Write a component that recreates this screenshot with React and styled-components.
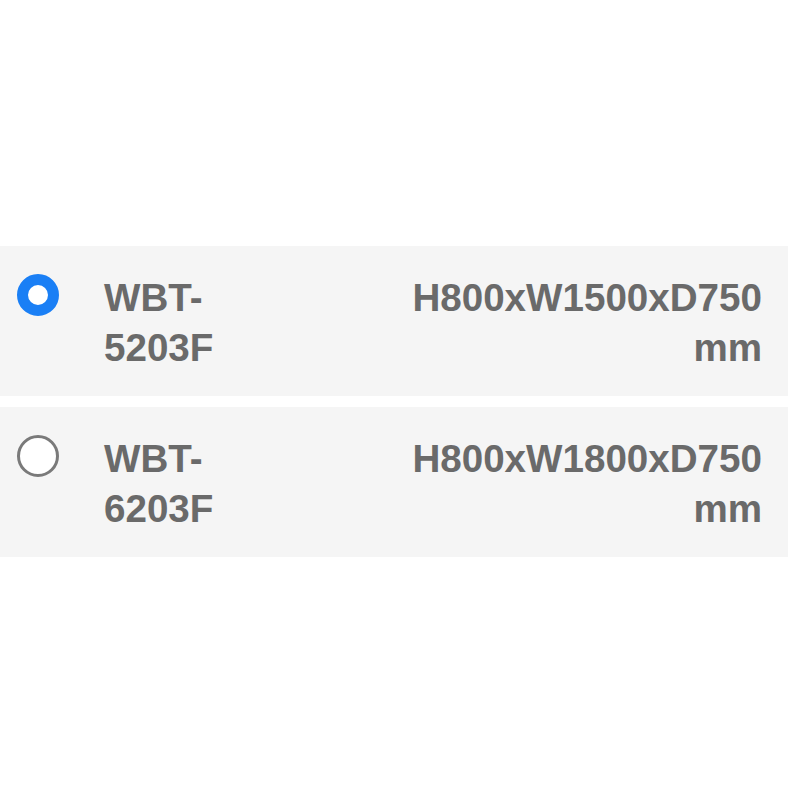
import React from "react";
import styled, { createGlobalStyle } from "styled-components";

const Global = createGlobalStyle`
  html, body { margin: 0; padding: 0; background: #fff; }
  body { font-family: "Liberation Sans", Arial, sans-serif; }
`;

const Page = styled.div`
  width: 800px;
  height: 800px;
  padding-top: 246px;
  box-sizing: border-box;
`;

const List = styled.div`
  width: 788px;
  display: flex;
  flex-direction: column;
  gap: 11px;
`;

const Row = styled.label`
  display: grid;
  grid-template-columns: 104px 1fr auto;
  align-items: start;
  background: #f5f5f5;
  padding: 27px 26px 23px 0;
  color: #6a6a6a;
  font-weight: bold;
  font-size: 38.6px;
  line-height: 50px;
`;

const RadioCell = styled.div`
  height: 50px;
  display: flex;
  align-items: center;
  padding-left: 17px;
`;

const Radio = styled.span`
  box-sizing: border-box;
  width: 42px;
  height: 42px;
  border-radius: 50%;
  background: #fff;
  border: ${(p) => (p.$checked ? "11px solid #1a7ff5" : "3px solid #7a7a7a")};
  margin-top: -6px;
`;

const Model = styled.div`
  width: 130px;
`;

const Size = styled.div`
  text-align: right;
  width: 370px;
`;

const items = [
  { model: ["WBT-", "5203F"], size: "H800xW1500xD750 mm", checked: true },
  { model: ["WBT-", "6203F"], size: "H800xW1800xD750 mm", checked: false },
];

export default function App() {
  return (
    <Page>
      <Global />
      <List>
        {items.map((it) => (
          <Row key={it.model[1]}>
            <RadioCell>
              <Radio $checked={it.checked} />
            </RadioCell>
            <Model>
              {it.model.map((l) => (
                <div key={l}>{l}</div>
              ))}
            </Model>
            <Size>{it.size}</Size>
          </Row>
        ))}
      </List>
    </Page>
  );
}
